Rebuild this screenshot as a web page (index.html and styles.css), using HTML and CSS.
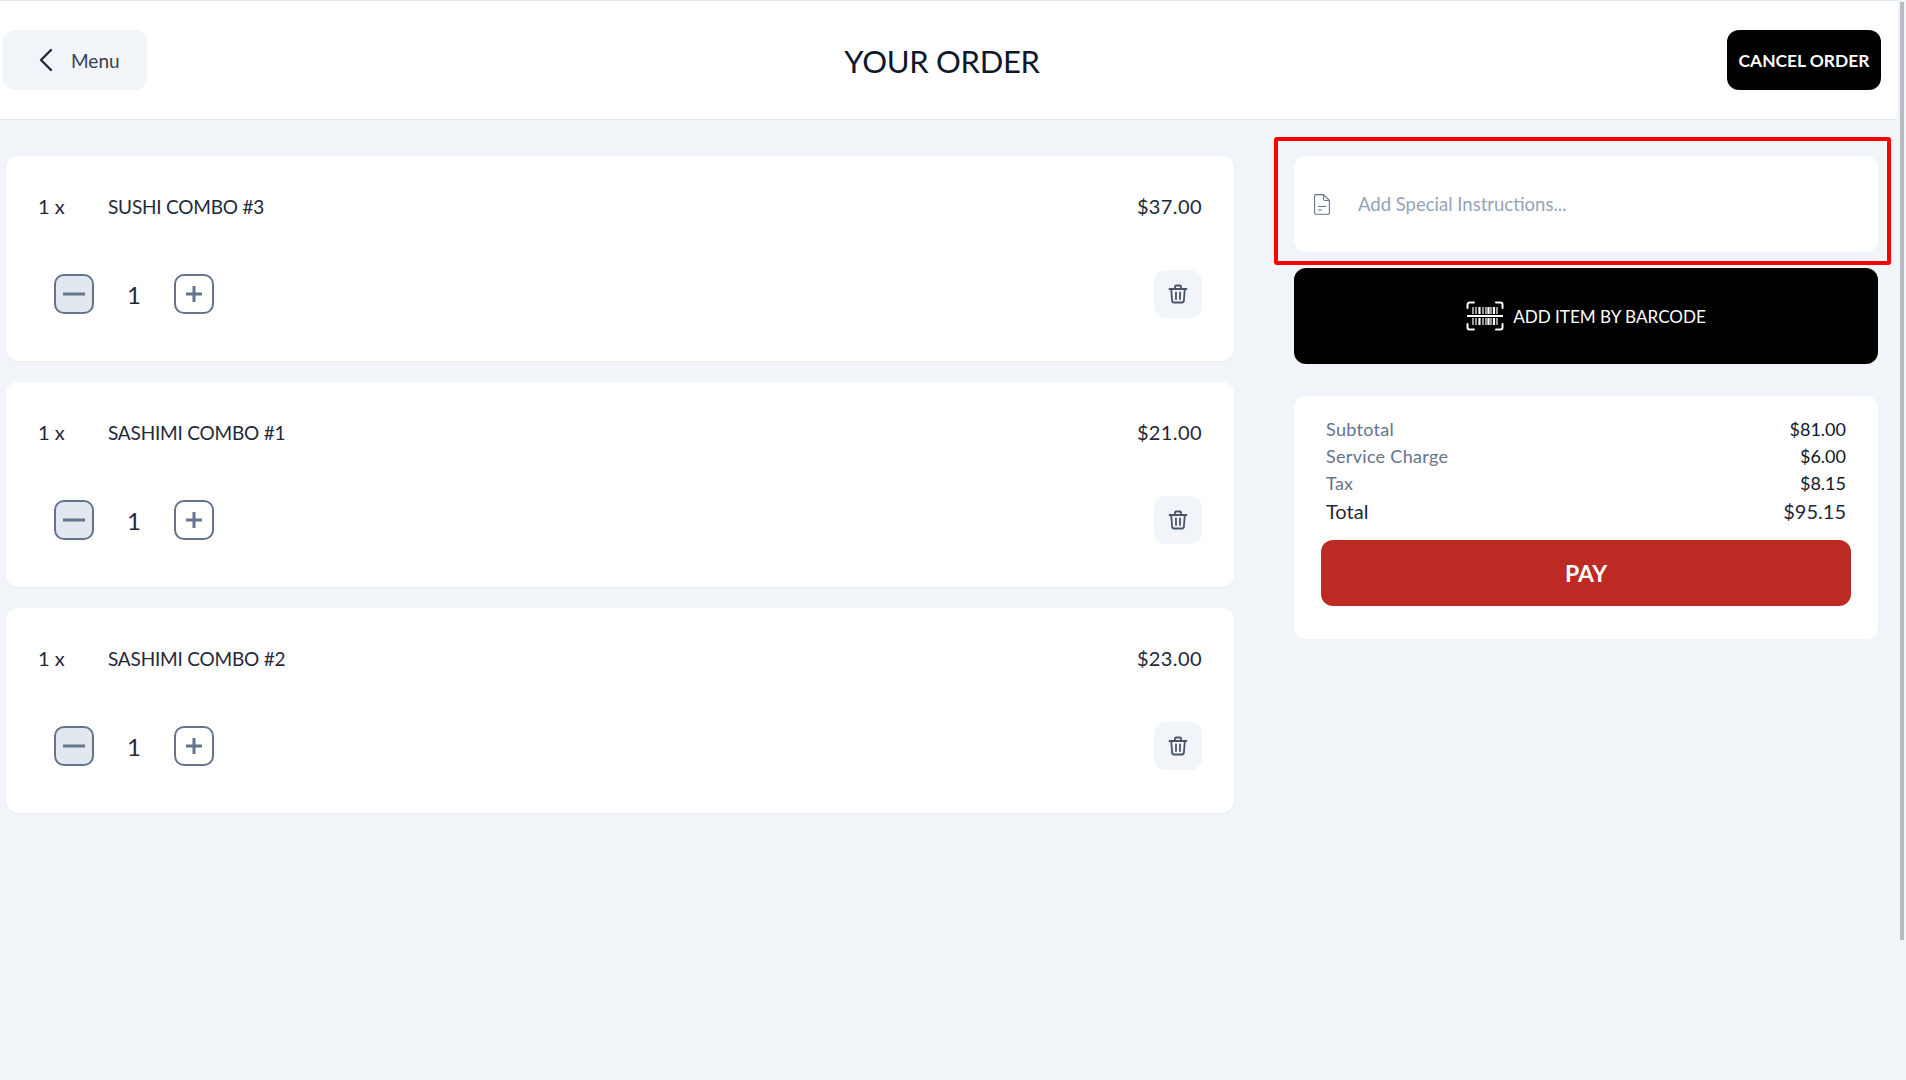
FILE: index.html
```html
<!DOCTYPE html>
<html lang="en">
<head>
    <meta charset="UTF-8">
    <meta name="viewport" content="width=device-width, initial-scale=1.0">
    <title>Your Order</title>
    <link rel="stylesheet" href="styles.css">
</head>
<body>
    <div class="page">
        <header class="topbar">
            <button class="menu-btn">
                <svg class="chevron" width="14" height="24" viewBox="0 0 14 24" fill="none" stroke="#1e293b" stroke-width="2.4" stroke-linecap="round" stroke-linejoin="round"><path d="M12 2 2 12l10 10"/></svg>
                <span>Menu</span>
            </button>
            <h1>YOUR ORDER</h1>
            <button class="cancel-btn">CANCEL ORDER</button>
        </header>

        <main class="content">
            <section class="items">
                <article class="item">
                    <div class="item-top">
                        <span class="item-count">1 x</span>
                        <span class="item-name">SUSHI COMBO #3</span>
                        <span class="item-price">$37.00</span>
                    </div>
                    <div class="item-bottom">
                        <div class="stepper">
                            <button class="step step-minus"><svg width="24" height="24" viewBox="0 0 24 24"><path d="M1 12h22" stroke="#64748b" stroke-width="3"/></svg></button>
                            <span class="step-value">1</span>
                            <button class="step"><svg width="24" height="24" viewBox="0 0 24 24"><path d="M4 12h16M12 4v16" stroke="#64748b" stroke-width="3"/></svg></button>
                        </div>
                        <button class="trash">
                            <svg width="20" height="20" viewBox="0 0 20 20" fill="none" stroke="#475569" stroke-width="1.8" stroke-linecap="round" stroke-linejoin="round"><path d="M1.5 5h17M7 5V2.5A1 1 0 0 1 8 1.5h4a1 1 0 0 1 1 1V5M3.2 5l.9 11.5A2 2 0 0 0 6 18.5h8a2 2 0 0 0 1.9-2L16.800 5M8 8.500v6.500M12 8.500v6.500"/></svg>
                        </button>
                    </div>
                </article>

                <article class="item">
                    <div class="item-top">
                        <span class="item-count">1 x</span>
                        <span class="item-name">SASHIMI COMBO #1</span>
                        <span class="item-price">$21.00</span>
                    </div>
                    <div class="item-bottom">
                        <div class="stepper">
                            <button class="step step-minus"><svg width="24" height="24" viewBox="0 0 24 24"><path d="M1 12h22" stroke="#64748b" stroke-width="3"/></svg></button>
                            <span class="step-value">1</span>
                            <button class="step"><svg width="24" height="24" viewBox="0 0 24 24"><path d="M4 12h16M12 4v16" stroke="#64748b" stroke-width="3"/></svg></button>
                        </div>
                        <button class="trash">
                            <svg width="20" height="20" viewBox="0 0 20 20" fill="none" stroke="#475569" stroke-width="1.8" stroke-linecap="round" stroke-linejoin="round"><path d="M1.5 5h17M7 5V2.5A1 1 0 0 1 8 1.5h4a1 1 0 0 1 1 1V5M3.2 5l.9 11.5A2 2 0 0 0 6 18.5h8a2 2 0 0 0 1.9-2L16.800 5M8 8.500v6.500M12 8.500v6.500"/></svg>
                        </button>
                    </div>
                </article>

                <article class="item">
                    <div class="item-top">
                        <span class="item-count">1 x</span>
                        <span class="item-name">SASHIMI COMBO #2</span>
                        <span class="item-price">$23.00</span>
                    </div>
                    <div class="item-bottom">
                        <div class="stepper">
                            <button class="step step-minus"><svg width="24" height="24" viewBox="0 0 24 24"><path d="M1 12h22" stroke="#64748b" stroke-width="3"/></svg></button>
                            <span class="step-value">1</span>
                            <button class="step"><svg width="24" height="24" viewBox="0 0 24 24"><path d="M4 12h16M12 4v16" stroke="#64748b" stroke-width="3"/></svg></button>
                        </div>
                        <button class="trash">
                            <svg width="20" height="20" viewBox="0 0 20 20" fill="none" stroke="#475569" stroke-width="1.8" stroke-linecap="round" stroke-linejoin="round"><path d="M1.5 5h17M7 5V2.5A1 1 0 0 1 8 1.500h4a1 1 0 0 1 1 1V5M3.2 5l.9 11.5A2 2 0 0 0 6 18.5h8a2 2 0 0 0 1.9-2L16.800 5M8 8.500v6.500M12 8.500v6.500"/></svg>
                        </button>
                    </div>
                </article>
            </section>

            <aside class="side">
                <label class="notes">
                    <svg width="16" height="21" viewBox="0 0 16 21" fill="none" stroke="#64748b" stroke-width="1.1" stroke-linejoin="round"><path d="M2 .6h7.500L15.400 6.500V18.500a1.800 1.800 0 0 1-1.800 1.800H2A1.500 1.500 0 0 1 .6 18.800V2A1.500 1.500 0 0 1 2 .6ZM9.500.6V5a1.500 1.500 0 0 0 1.500 1.500h4.400M4 12.500h8M4 16h4"/></svg>
                    <input type="text" placeholder="Add Special Instructions...">
                </label>

                <button class="barcode-btn">
                    <svg width="38" height="30" viewBox="0 0 38 30" fill="none" stroke="#fff">
                        <path d="M1.500 7V3.500a2 2 0 0 1 2-2H8M30 1.500h4.500a2 2 0 0 1 2 2V7M1.500 23v3.500a2 2 0 0 0 2 2H8M30 28.500h4.500a2 2 0 0 0 2-2V23" stroke-width="2" stroke-linecap="round"/>
                        <path d="M1 15h36" stroke-width="2"/>
                        <path d="M7 6v7M10 6v7M17 6v7M20 6v7M25 6v7M31 6v7M7 17v7M10 17v7M17 17v7M20 17v7M25 17v7M31 17v7" stroke-width="1.200"/>
                        <path d="M13.500 6v7M22.500 6v7M28 6v7M13.500 17v7M22.500 17v7M28 17v7" stroke-width="2.200"/>
                    </svg>
                    <span>ADD ITEM BY BARCODE</span>
                </button>

                <section class="summary">
                    <div class="sum-row"><span>Subtotal</span><b>$81.00</b></div>
                    <div class="sum-row"><span>Service Charge</span><b>$6.00</b></div>
                    <div class="sum-row"><span>Tax</span><b>$8.15</b></div>
                    <div class="sum-row sum-total"><span>Total</span><b>$95.15</b></div>
                    <button class="pay-btn">PAY</button>
                </section>
            </aside>
        </main>
    </div>

    <!-- annotation box + scrollbar thumb from the screenshot -->
    <div class="highlight"></div>
    <div class="scroll-thumb"></div>
</body>
</html>
```

FILE: styles.css
```css
/* General Styles */
* {
    box-sizing: border-box;
}

body {
    margin: 0;
    height: 1080px;
    overflow: hidden;
    background-color: #f1f5f9;
    font-family: 'Lato', 'Noto Sans', sans-serif;
    color: #1e293b;
}

button {
    font-family: inherit;
    border: none;
    cursor: pointer;
}

.page {
    width: 1897px;
}

/* Header */
.topbar {
    height: 120px;
    padding: 29px 16px 0 3px;
    display: flex;
    justify-content: space-between;
    align-items: flex-start;
    background: #fff;
    border-top: 1px solid #e2e8f0;
    border-bottom: 1px solid #e2e8f0;
}

.topbar h1 {
    margin: 0 0 0 10px;
    width: 300px;
    line-height: 62px;
    font-size: 31px;
    font-weight: 400;
    letter-spacing: -0.3px;
    text-align: center;
    color: #0f172a;
}

.menu-btn {
    width: 144px;
    height: 60px;
    padding-left: 36px;
    display: flex;
    align-items: center;
    gap: 18px;
    background-color: #f1f5f9;
    border-radius: 12px;
    font-size: 19px;
    color: #334155;
}

.cancel-btn {
    width: 154px;
    height: 60px;
    padding: 0;
    background-color: #000;
    color: #fff;
    border-radius: 12px;
    font-size: 17.400px;
    font-weight: 700;
}

/* Layout */
.content {
    display: flex;
    align-items: flex-start;
    padding: 36px 17px 0 6px;
    gap: 60px;
}

.items {
    width: 1228px;
    display: flex;
    flex-direction: column;
    gap: 21px;
}

/* Order items */
.item {
    height: 205px;
    padding: 34px 32px 0 32px;
    background: #fff;
    border-radius: 12px;
    box-shadow: 0 1px 2px rgba(15, 23, 42, 0.05);
}

.item-top {
    display: flex;
    align-items: center;
    height: 32px;
    font-size: 20px;
}

.item-count {
    width: 70px;
}

.item-name {
    flex: 1;
    font-size: 19px;
    letter-spacing: -0.2px;
}

.item-price {
    letter-spacing: 0.4px;
}

.item-bottom {
    margin-top: 48px;
    display: flex;
    justify-content: space-between;
    align-items: center;
    padding-left: 16px;
}

.stepper {
    display: flex;
    align-items: center;
}

.step {
    width: 40px;
    height: 40px;
    padding: 0;
    display: flex;
    align-items: center;
    justify-content: center;
    background: #fff;
    border: 2px solid #64748b;
    border-radius: 10px;
}

.step-minus {
    background-color: #e2e8f0;
}

.step-value {
    width: 80px;
    text-align: center;
    font-size: 24px;
}

.trash {
    width: 48px;
    height: 48px;
    padding: 0;
    display: flex;
    align-items: center;
    justify-content: center;
    background-color: #f1f5f9;
    border-radius: 12px;
}

/* Right column */
.side {
    width: 584px;
    display: flex;
    flex-direction: column;
}

.notes {
    height: 96px;
    padding-left: 20px;
    display: flex;
    align-items: center;
    gap: 26px;
    background: #fff;
    border-radius: 12px;
}

.notes input {
    flex: 1;
    border: none;
    outline: none;
    font-family: inherit;
    font-size: 18.500px;
    color: #1e293b;
}

.notes input::placeholder {
    color: #94a3b8;
}

.barcode-btn {
    height: 96px;
    margin-top: 16px;
    display: flex;
    align-items: center;
    justify-content: center;
    gap: 9px;
    background-color: #000;
    color: #fff;
    border-radius: 12px;
    font-size: 17.100px;
}

.summary {
    height: 243px;
    margin-top: 32px;
    padding: 19px 27px 0 27px;
    background: #fff;
    border-radius: 12px;
}

.sum-row {
    display: flex;
    justify-content: space-between;
    align-items: center;
    height: 27px;
    padding: 0 5px;
    font-size: 18px;
    color: #64748b;
}

.sum-row span {
    letter-spacing: 0.3px;
}

.sum-row b {
    font-weight: 400;
    color: #0f172a;
}

.sum-total {
    height: 30px;
    font-size: 20px;
    color: #1e293b;
}

.sum-total span {
    letter-spacing: 0;
}

.sum-total b {
    color: #1e293b;
}

.pay-btn {
    width: 100%;
    height: 66px;
    margin-top: 14px;
    background-color: #bd2a23;
    color: #fff;
    border-radius: 12px;
    font-size: 23px;
    font-weight: 700;
}

/* Overlays */
.highlight {
    position: absolute;
    left: 1274px;
    top: 137px;
    width: 617px;
    height: 128px;
    border: 4px solid #fe0000;
    border-radius: 3px;
}

.scroll-thumb {
    position: absolute;
    left: 1900px;
    top: 2px;
    width: 4px;
    height: 938px;
    background-color: #b6bbc0;
}
```
